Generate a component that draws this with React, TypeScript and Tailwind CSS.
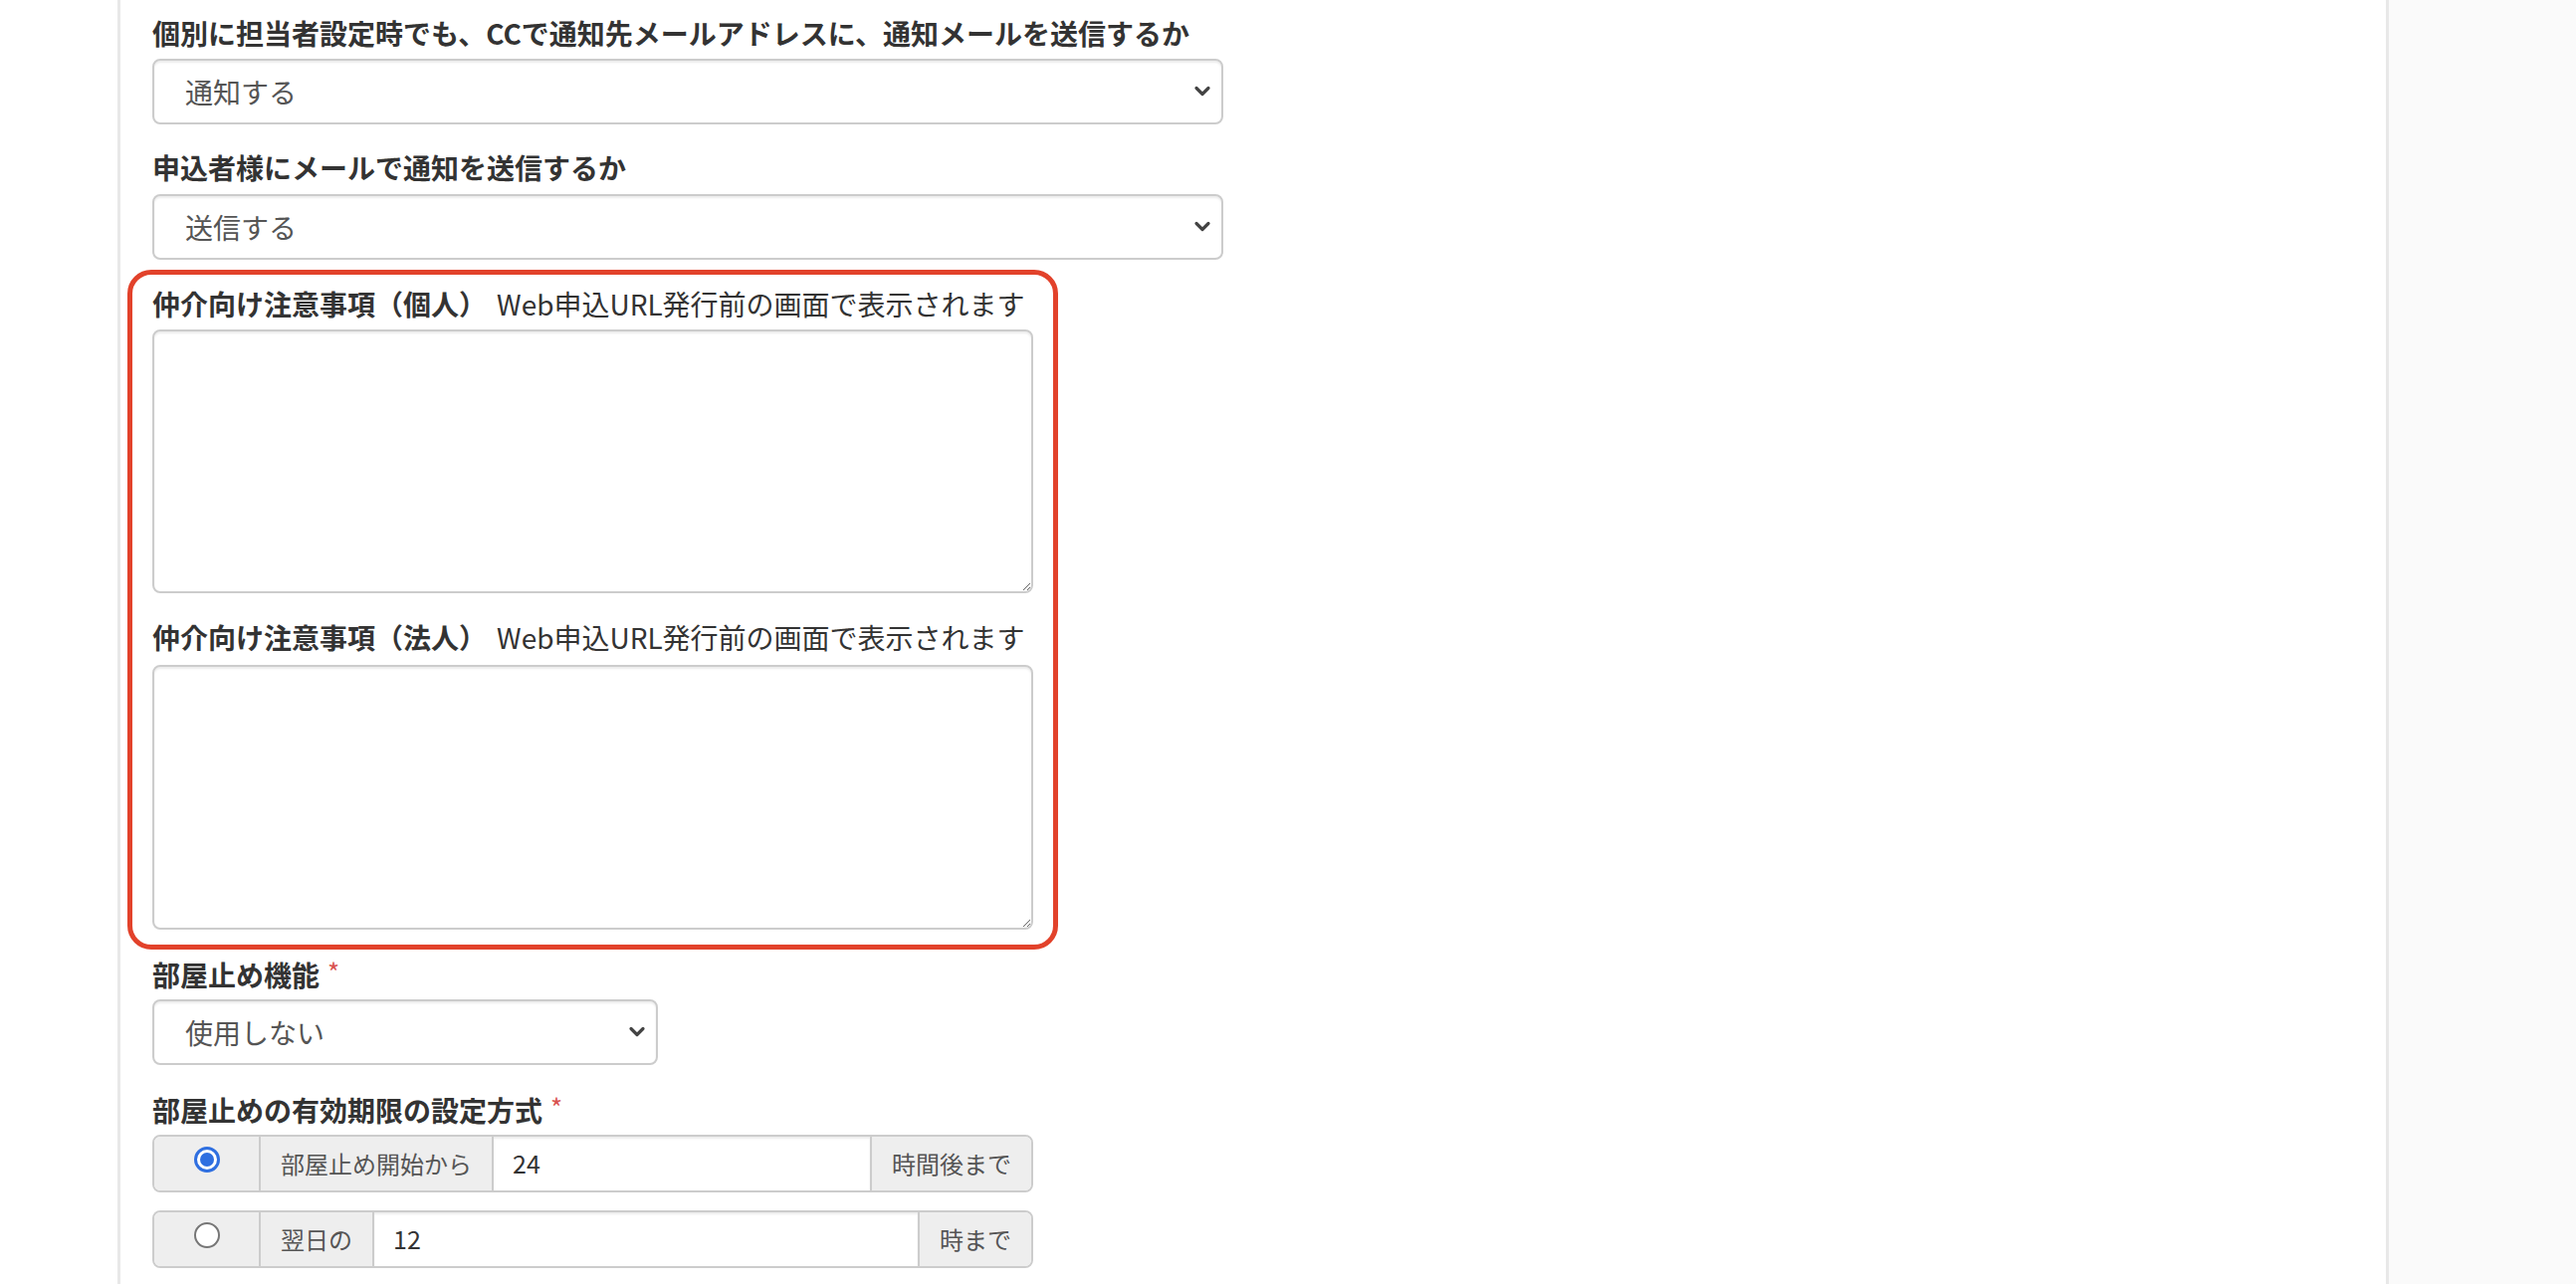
import React from 'react';

const font = { fontFamily: '"Hiragino Sans", "Noto Sans CJK JP", "Noto Sans", sans-serif' };

// 下向きのシェブロン
const Chevron = () => (
  <svg className="pointer-events-none absolute top-1/2 -translate-y-1/2 right-[12px]" width="18" height="14" viewBox="0 0 18 14">
    <path d="M3 3.5 L9 9.5 L15 3.5" fill="none" stroke="#444" strokeWidth="3.2" strokeLinecap="round" strokeLinejoin="round" />
  </svg>
);

const SelectBox = ({ value, width }: { value: string; width: string }) => (
  <div className={`relative ${width}`}>
    <select
      defaultValue={value}
      className="appearance-none w-full h-[66px] rounded-[8px] border-2 border-[#ccc] bg-white pl-[31px] text-[28px] text-[#555] shadow-[inset_0_2px_2px_rgba(0,0,0,0.075)] outline-none"
      style={font}
    >
      <option>{value}</option>
    </select>
    <Chevron />
  </div>
);

const Label = ({ children, required }: { children: React.ReactNode; required?: boolean }) => (
  <div className="h-[40px] text-[28px] leading-[40px] font-bold text-[#333] whitespace-nowrap">
    {children}
    {required && <span className="relative -top-[4px] ml-[8px] text-[26px] leading-none font-normal text-[#d9534f]">*</span>}
  </div>
);

const Radio = ({ checked }: { checked?: boolean }) =>
  checked ? (
    <span className="block w-[26px] h-[26px] rounded-full border-[3px] border-[#2f6fe0] bg-white p-[3px]">
      <span className="block w-full h-full rounded-full bg-[#2f6fe0]" />
    </span>
  ) : (
    <span className="block w-[26px] h-[26px] rounded-full border-2 border-[#767676] bg-white" />
  );

const InputGroup = ({
  checked,
  prefix,
  prefixWidth,
  value,
  suffix,
  suffixWidth,
}: {
  checked?: boolean;
  prefix: string;
  prefixWidth: string;
  value: string;
  suffix: string;
  suffixWidth: string;
}) => (
  <div className="flex h-[58px] w-[885px] rounded-[8px] border-2 border-[#ccc] overflow-hidden text-[24px] text-[#555]">
    <div className="w-[107px] shrink-0 flex justify-center pt-[10px] bg-[#eee] border-r-2 border-[#ccc]">
      <Radio checked={checked} />
    </div>
    <div className={`${prefixWidth} shrink-0 flex items-center justify-center bg-[#eee] border-r-2 border-[#ccc]`}>
      {prefix}
    </div>
    <div className="flex-1 flex items-center pl-[19px] bg-white text-[25px] text-[#333] shadow-[inset_0_2px_2px_rgba(0,0,0,0.075)]">
      {value}
    </div>
    <div className={`${suffixWidth} shrink-0 flex items-center justify-center bg-[#eee] border-l-2 border-[#ccc]`}>
      {suffix}
    </div>
  </div>
);

const NoteField = ({ kind }: { kind: string }) => (
  <Label>
    仲介向け注意事項（{kind}）
    <span className="ml-[10px] font-normal">Web申込URL発行前の画面で表示されます</span>
  </Label>
);

export default function App() {
  return (
    <div className="min-h-screen w-full flex bg-white" style={font}>
      <div className="w-[118px] shrink-0 bg-white" />
      <div className="w-[2282px] shrink-0 min-h-screen bg-white border-l-[3px] border-r-[3px] border-[#e8e8e8] pl-[32px] pt-[13px]">
        <Label>個別に担当者設定時でも、CCで通知先メールアドレスに、通知メールを送信するか</Label>
        <div className="mt-[6px]">
          <SelectBox value="通知する" width="w-[1076px]" />
        </div>

        <div className="mt-[23px]">
          <Label>申込者様にメールで通知を送信するか</Label>
        </div>
        <div className="mt-[7px]">
          <SelectBox value="送信する" width="w-[1076px]" />
        </div>

        {/* 赤枠で囲まれた注意事項エリア */}
        <div className="mt-[10px] -ml-[25px] w-[935px] rounded-[24px] border-[5px] border-[#e2422b] pl-[20px] pt-[9px] pb-[15px]">
          <NoteField kind="個人" />
          <textarea className="mt-[6px] block w-[885px] h-[265px] rounded-[8px] border-2 border-[#ccc] bg-white shadow-[inset_0_2px_2px_rgba(0,0,0,0.075)] outline-none" />
          <div className="mt-[24px]">
            <NoteField kind="法人" />
          </div>
          <textarea className="mt-[8px] block w-[885px] h-[266px] rounded-[8px] border-2 border-[#ccc] bg-white shadow-[inset_0_2px_2px_rgba(0,0,0,0.075)] outline-none" />
        </div>

        <div className="mt-[5px]">
          <Label required>部屋止め機能</Label>
        </div>
        <div className="mt-[5px]">
          <SelectBox value="使用しない" width="w-[508px]" />
        </div>

        <div className="mt-[25px]">
          <Label required>部屋止めの有効期限の設定方式</Label>
        </div>
        <div className="mt-[5px]">
          <InputGroup checked prefix="部屋止め開始から" prefixWidth="w-[234px]" value="24" suffix="時間後まで" suffixWidth="w-[162px]" />
        </div>
        <div className="mt-[18px]">
          <InputGroup prefix="翌日の" prefixWidth="w-[114px]" value="12" suffix="時まで" suffixWidth="w-[114px]" />
        </div>
      </div>
      <div className="flex-1 bg-[#fafafa]" />
    </div>
  );
}
